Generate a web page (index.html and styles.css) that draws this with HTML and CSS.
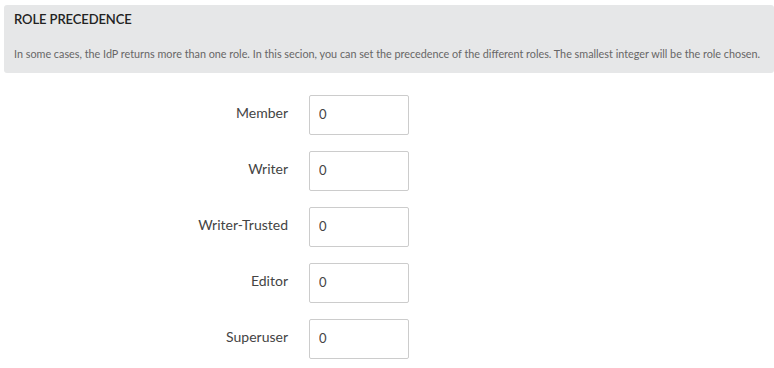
FILE: index.html
```html
<!DOCTYPE html>
<html>
<head>
<meta charset="utf-8">
<link rel="stylesheet" href="styles.css">
</head>
<body>
<div class="panel">
  <div class="panel-title">ROLE PRECEDENCE</div>
  <div class="panel-desc">In some cases, the IdP returns more than one role. In this secion, you can set the precedence of the different roles. The smallest integer will be the role chosen.</div>
</div>
<form class="roles">
  <label class="role-label" for="r1">Member</label>
  <input class="role-input" id="r1" type="text" value="0">
  <label class="role-label" for="r2">Writer</label>
  <input class="role-input" id="r2" type="text" value="0">
  <label class="role-label" for="r3">Writer-Trusted</label>
  <input class="role-input" id="r3" type="text" value="0">
  <label class="role-label" for="r4">Editor</label>
  <input class="role-input" id="r4" type="text" value="0">
  <label class="role-label" for="r5">Superuser</label>
  <input class="role-input" id="r5" type="text" value="0">
</form>
</body>
</html>
```
FILE: styles.css
```css
html, body {
  margin: 0;
  padding: 0;
  background: #ffffff;
  font-family: Lato, "Open Sans", sans-serif;
}
body {
  padding: 5px 0 0 4px;
}
.panel {
  background: #e6e7e8;
  border-radius: 3px;
  padding: 5px 10px 10px 10px;
  height: 53px;
}
.panel-title {
  font-size: 13px;
  line-height: 18px;
  font-weight: 600;
  color: #222222;
  letter-spacing: -0.1px;
}
.panel-desc {
  margin-top: 18px;
  font-size: 10.8px;
  line-height: 16px;
  color: #666666;
}
.roles {
  margin-top: 22px;
  display: grid;
  grid-template-columns: 284px 100px;
  column-gap: 21px;
  row-gap: 16px;
  align-items: center;
}
.role-label {
  text-align: right;
  font-size: 14px;
  line-height: 18px;
  margin-bottom: 5px;
  color: #444444;
}
.role-input {
  box-sizing: border-box;
  width: 100px;
  height: 40px;
  margin: 0;
  padding: 0 9px 3px 9px;
  border: 1px solid #cccccc;
  border-radius: 2px;
  font-family: Lato, "Open Sans", sans-serif;
  font-size: 13px;
  color: #444444;
  background: #ffffff;
}
```
